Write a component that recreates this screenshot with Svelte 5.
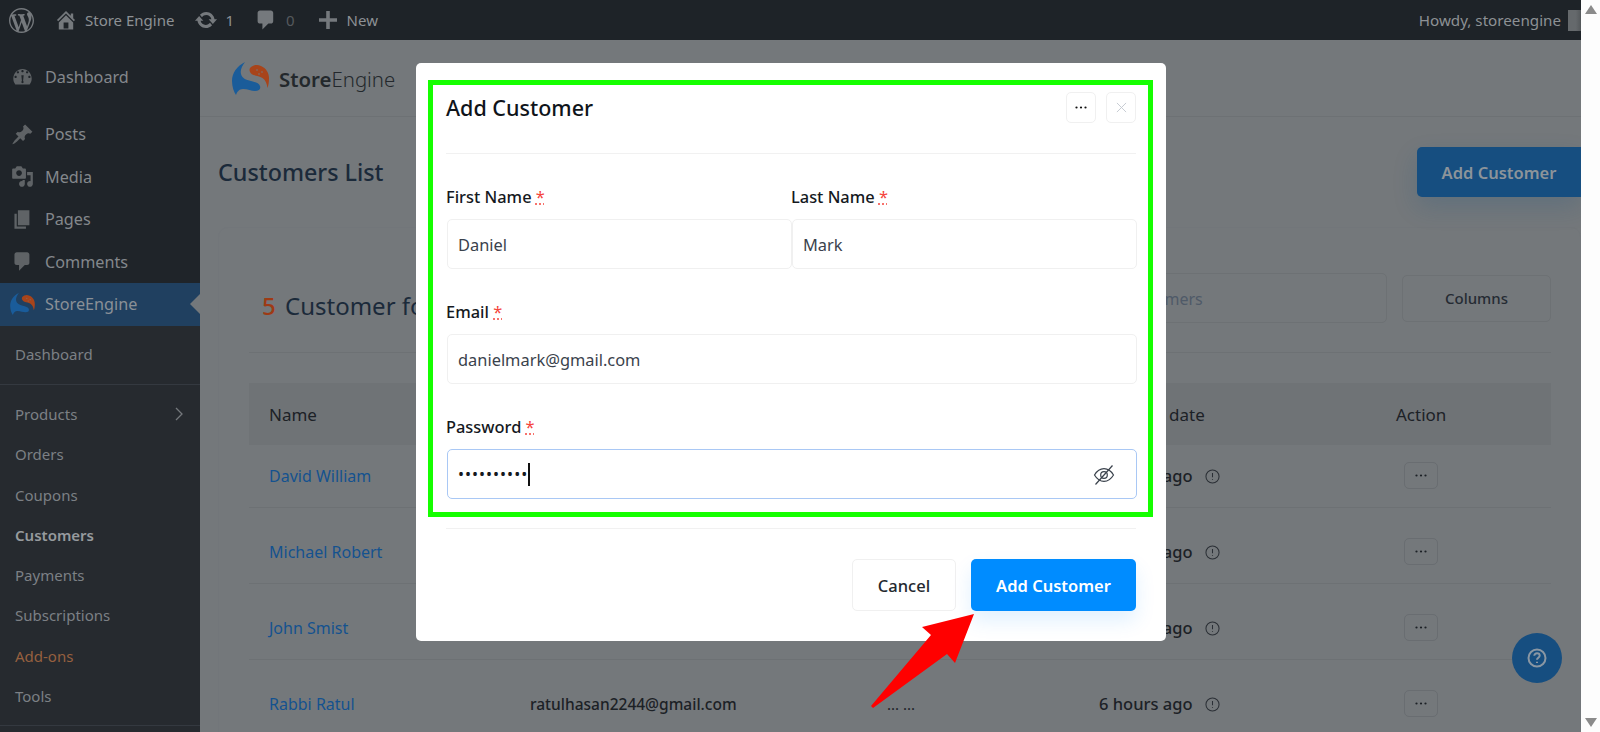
<script>
  const menu = [
    { label: "Posts", d: "M10.44 3.02l1.82-1.82 6.36 6.35-1.83 1.82c-1.05-.68-2.48-.57-3.41.36l-.75.75c-.92.93-1.04 2.35-.35 3.41l-1.83 1.82-2.41-2.41-2.8 2.79c-.42.42-3.38 2.71-3.8 2.29s1.86-3.39 2.28-3.81l2.79-2.79L4.1 9.36l1.83-1.82c1.05.69 2.48.57 3.4-.36l.75-.75c.93-.92 1.05-2.35.36-3.41z" },
    { label: "Media", d: "M13 11V4c0-.55-.45-1-1-1h-1.67L9 1H5L3.67 3H2c-.55 0-1 .45-1 1v7c0 .55.45 1 1 1h10c.55 0 1-.45 1-1zM7 4.5c1.38 0 2.5 1.12 2.5 2.5S8.38 9.5 7 9.5 4.5 8.38 4.5 7 5.62 4.5 7 4.5zM14 6h5v10.5c0 1.38-1.12 2.5-2.5 2.5S14 17.88 14 16.5s1.12-2.5 2.5-2.5c.17 0 .34.02.5.05V9h-3V6zm-4 8.05V13h2v3.5c0 1.38-1.12 2.5-2.5 2.5S7 17.88 7 16.5 8.12 14 9.5 14c.17 0 .34.02.5.05z" },
    { label: "Pages", d: "M6 15V2h10v13H6zm-1 1h8v2H3V5h2v11z" },
    { label: "Comments", d: "M5 2h9c1.1 0 2 .9 2 2v7c0 1.1-.9 2-2 2h-2l-5 5v-5H5c-1.1 0-2-.9-2-2V4c0-1.1.9-2 2-2z" },
  ];

  const submenu = ["Products", "Orders", "Coupons", "Customers", "Payments", "Subscriptions", "Add-ons", "Tools"];

  const customers = [
    { name: "David William", email: "davidwilliam@gmail.com" },
    { name: "Michael Robert", email: "michaelrobert@gmail.com" },
    { name: "John Smist", email: "johnsmist@gmail.com" },
    { name: "Rabbi Ratul", email: "ratulhasan2244@gmail.com" },
  ];
</script>

{#snippet logo(cls)}
  <svg class={cls} viewBox="0 0 37 33">
    <path fill="#1a5c9a" d="M13 0C5 4 0 11 0 19c0 6 2 11 4 14 1-3 3-6 7-6 5 0 8 2 12 2 4 0 6-2 5-5-1-3-5-4-9-5-5-1-9-3-10-7-1-4 1-8 4-12z" />
    <path fill="#a8441a" d="M18 6c3-3 7-4 11-2 5 2 8 7 8 12 0 4-.5 7-1.500 10-.5-4-2-8-5-10-3-2-6-2-9-3-3-1-5-4-3.500-7z" />
    <circle cx="25" cy="8" r=".8" fill="#74787b" /><circle cx="30" cy="10" r=".8" fill="#74787b" /><circle cx="27" cy="12" r=".8" fill="#74787b" />
  </svg>
{/snippet}

{#snippet dots()}
  <svg class="dots" viewBox="0 0 12 3"><circle cx="1.500" cy="1.500" r="1.100" /><circle cx="6" cy="1.500" r="1.100" /><circle cx="10.500" cy="1.500" r="1.100" /></svg>
{/snippet}

<div class="page">
  <div class="viewport">
    <header class="adminbar">
      <svg class="ab-wp" viewBox="0 0 20 20"><path d="M20 10c0-5.510-4.490-10-10-10C4.480 0 0 4.490 0 10c0 5.520 4.480 10 10 10 5.510 0 10-4.480 10-10zM7.780 15.370L4.370 6.220c.55-.02 1.170-.08 1.170-.08.5-.06.44-1.130-.06-1.110 0 0-1.450.11-2.370.11-.18 0-.37 0-.58-.01C4.120 2.690 6.880 1.110 10 1.110c2.330 0 4.450.87 6.050 2.340-.68-.11-1.650.39-1.650 1.580 0 .74.45 1.360.9 2.100.35.61.55 1.360.55 2.460 0 1.490-1.400 5-1.400 5l-3.030-8.370c.54-.02.82-.17.82-.17.5-.05.44-1.250-.06-1.220 0 0-1.440.12-2.380.12-.87 0-2.330-.12-2.330-.12-.5-.03-.56 1.200-.06 1.220l.92.08 1.260 3.410zM17.410 10c.24-.64.74-1.870.43-4.250.7 1.290 1.050 2.710 1.050 4.250 0 3.290-1.730 6.240-4.400 7.780.97-2.590 1.940-5.200 2.920-7.780zM6.100 18.090C3.120 16.650 1.110 13.530 1.110 10c0-1.300.23-2.480.72-3.590C3.250 10.300 4.670 14.200 6.100 18.090zm4.030-6.630l2.580 6.980c-.86.29-1.760.45-2.710.45-.79 0-1.570-.11-2.290-.33.81-2.380 1.620-4.740 2.420-7.100z" /></svg>
      <svg class="ab-icon home" viewBox="0 0 20 20"><path fill-rule="evenodd" d="M16 8.500l1.530 1.530-1.060 1.060L10 4.620l-6.470 6.470-1.060-1.060L10 2.500l4 4v-2h2v4zm-6-2.460l6 5.990V18H4v-5.970zM12 17v-5H8v5h4z" /></svg>
      <span class="ab-site">Store Engine</span>
      <svg class="ab-icon upd" viewBox="0 0 20 20"><path d="M10.200 3.280c3.530 0 6.430 2.610 6.920 6h2.080l-3.500 4-3.500-4h2.320c-.45-1.970-2.210-3.440-4.320-3.440-1.450 0-2.730.71-3.540 1.780L4.950 5.660C6.230 4.200 8.110 3.280 10.200 3.280zm-.4 13.440c-3.520 0-6.430-2.610-6.920-6H.8l3.500-4c1.170 1.330 2.330 2.670 3.500 4H5.480c.45 1.970 2.210 3.440 4.320 3.440 1.450 0 2.730-.71 3.540-1.780l1.710 1.950c-1.280 1.460-3.150 2.390-5.250 2.390z" /></svg>
      <span class="ab-count">1</span>
      <svg class="ab-icon cmt" viewBox="0 0 20 20"><path d="M5 2h9c1.100 0 2 .9 2 2v7c0 1.100-.9 2-2 2h-2l-5 5v-5H5c-1.100 0-2-.9-2-2V4c0-1.100.9-2 2-2z" /></svg>
      <span class="ab-count zero">0</span>
      <svg class="ab-icon plus" viewBox="0 0 20 20"><path d="M17.500 8.500v3h-6v6h-3v-6h-6v-3h6v-6h3v6h6z" /></svg>
      <span class="ab-new">New</span>
      <span class="ab-howdy">Howdy, storeengine</span>
      <span class="ab-avatar"></span>
    </header>

    <div class="below">
      <aside class="sidebar">
        <nav class="menu">
          <a class="item first">
            <svg class="mi" viewBox="0 0 20 20"><path fill-rule="evenodd" d="M3.760 16h12.480c1.100-1.430 1.760-3.210 1.760-5.140C18 6.260 14.420 2.500 10 2.500S2 6.260 2 10.860c0 1.930.66 3.710 1.760 5.140zM10 3.500c.55 0 1 .45 1 1s-.45 1-1 1-1-.45-1-1 .45-1 1-1zM6 4.500c.55 0 1 .45 1 1s-.45 1-1 1-1-.45-1-1 .45-1 1-1zm8 0c.55 0 1 .45 1 1s-.45 1-1 1-1-.45-1-1 .45-1 1-1zM4 8.500c.55 0 1 .45 1 1s-.45 1-1 1-1-.45-1-1 .45-1 1-1zm12 0c.55 0 1 .45 1 1s-.45 1-1 1-1-.45-1-1 .45-1 1-1zM11 8l-.5 5c.3.2.5.5.5 1 0 .6-.4 1-1 1s-1-.4-1-1c0-.5.2-.8.5-1L9 8h2z" /></svg>
            Dashboard
          </a>
          {#each menu as m}
            <a class="item">
              <svg class="mi" viewBox="0 0 20 20"><path d={m.d} /></svg>
              {m.label}
            </a>
          {/each}
          <a class="item active">
            {@render logo("mi-logo")}
            StoreEngine
            <span class="notch"></span>
          </a>
        </nav>
        <div class="sub">
          <a class="sub-dash">Dashboard</a>
          <ul>
            {#each submenu as s}
              <li class:strong={s === "Customers"} class:addon={s === "Add-ons"}>
                {s}
                {#if s === "Products"}
                  <svg class="chev" viewBox="0 0 8 14"><path d="M1 1l6 6-6 6" /></svg>
                {/if}
              </li>
            {/each}
          </ul>
        </div>
      </aside>

      <main class="main">
        <div class="brandbar">
          {@render logo("brand-logo")}
          <span class="brand"><b>Store</b>Engine</span>
        </div>

        <div class="content">
          <div class="titlerow">
            <h1>Customers List</h1>
            <button class="primary-dim">Add Customer</button>
          </div>

          <section class="card">
            <div class="cardhead">
              <h2><span class="num">5</span> Customer found</h2>
              <div class="tools">
                <div class="search">Search customers</div>
                <button class="columns">Columns</button>
              </div>
            </div>

            <div class="table">
              <div class="thead">
                <span>Name</span>
                <span>Email</span>
                <span>Phone</span>
                <span class="th-date">Update date</span>
                <span>Action</span>
              </div>
              {#each customers as c, i}
                <div class="tr" class:first={i === 0}>
                  <a class="name">{c.name}</a>
                  <span class="email">{c.email}</span>
                  <span class="phone">... ...</span>
                  <span class="date">6 hours ago
                    <svg class="info" viewBox="0 0 16 16"><circle cx="8" cy="8" r="7" /><path d="M8 4.200v4.600M8 10.800v1" /></svg>
                  </span>
                  <span class="act"><button class="actbtn">{@render dots()}</button></span>
                </div>
              {/each}
            </div>
          </section>
        </div>

        <button class="help" aria-label="Help">
          <svg viewBox="0 0 20 20"><circle cx="10" cy="10" r="8.500" /><path d="M7.300 7.800c0-1.600 1.200-2.600 2.700-2.600s2.700 1 2.700 2.400c0 2.200-2.700 2.200-2.700 4.200M10 13.700v1.400" /></svg>
        </button>
      </main>
    </div>
  </div>

  <div class="scrollbar">
    <span class="up"></span>
    <span class="down"></span>
  </div>

  <div class="modal">
    <div class="mhead">
      <h3>Add Customer</h3>
      <div class="mbtns">
        <button class="mbtn">{@render dots()}</button>
        <button class="mbtn" aria-label="Close">
          <svg class="x" viewBox="0 0 12 12"><path d="M1 1l10 10M11 1L1 11" /></svg>
        </button>
      </div>
    </div>

    <form class="mbody">
      <div class="two">
        <div>
          <label>First Name <abbr>*</abbr></label>
          <input class="inp" value="Daniel" />
        </div>
        <div>
          <label>Last Name <abbr>*</abbr></label>
          <input class="inp" value="Mark" />
        </div>
      </div>
      <label>Email <abbr>*</abbr></label>
      <input class="inp" value="danielmark@gmail.com" />
      <label>Password <abbr>*</abbr></label>
      <div class="pass">
        <span class="pwdots">{"•".repeat(10)}</span><span class="caret"></span>
        <svg class="eye" viewBox="0 0 22 22"><path d="M1.500 11C4 6.800 7.300 4.700 11 4.700s7 2.100 9.500 6.300c-2.500 4.200-5.800 6.300-9.500 6.300S4 15.200 1.500 11z" /><circle cx="11" cy="11" r="3.300" /><path d="M19.500 1.500L2.500 20.500" /></svg>
      </div>
    </form>

    <div class="mfoot">
      <button class="cancel">Cancel</button>
      <button class="submit">Add Customer</button>
    </div>

    <div class="highlight"></div>
  </div>

  <svg class="arrow" viewBox="0 0 110 100"><polygon points="104,4 52,17 61,25 1,96 3,98 77,44 85,53" /></svg>
</div>

<style>
  :global(body) {
    margin: 0;
    background: #fff;
  }

  .page {
    position: relative;
    display: flex;
    width: 1600px;
    height: 732px;
    overflow: hidden;
    font-family: "Noto Sans", "Open Sans", sans-serif;
    font-size: 16px;
    color: #1c2126;
  }

  button {
    font-family: inherit;
    cursor: pointer;
  }

  .viewport {
    flex: 0 0 1581px;
    display: flex;
    flex-direction: column;
    overflow: hidden;
    background: #74787b;
  }

  .scrollbar {
    position: relative;
    flex: 1;
    background: #fdfdfd;
  }
  .up, .down {
    position: absolute;
    left: 4px;
    width: 0;
    height: 0;
    border-left: 6px solid transparent;
    border-right: 6px solid transparent;
  }
  .up { top: 5px; border-bottom: 9px solid #8b8b8b; }
  .down { bottom: 5px; border-top: 9px solid #8b8b8b; }

  /* admin bar */
  .adminbar {
    flex: 0 0 40px;
    display: flex;
    align-items: center;
    background: #1e2328;
    color: #8d9195;
    font-size: 15px;
    white-space: nowrap;
  }
  .ab-wp {
    width: 25px;
    height: 25px;
    margin-left: 9px;
    fill: #75797d;
  }
  .ab-icon {
    width: 24px;
    height: 24px;
    fill: #75797d;
  }
  .home { margin-left: 20px; }
  .ab-site { margin-left: 7px; }
  .upd { margin-left: 20px; }
  .ab-count { margin-left: 7px; }
  .cmt { margin-left: 20px; }
  .ab-count.zero { color: #55595d; margin-left: 8px; }
  .plus { margin-left: 21px; }
  .ab-new { margin-left: 7px; }
  .ab-howdy { margin-left: auto; font-size: 15.200px; }
  .ab-avatar {
    width: 13px;
    height: 21px;
    margin-left: 7px;
    background: linear-gradient(90deg, #65696c 60%, #54585b);
  }

  .below {
    flex: 1;
    display: flex;
    min-height: 0;
  }

  /* sidebar */
  .sidebar {
    flex: 0 0 200px;
    display: flex;
    flex-direction: column;
    background: #262a2f;
    color: #84888c;
  }
  .menu {
    background: #1f2429;
    padding-top: 16px;
    height: 285px;
    box-sizing: border-box;
    display: flex;
    flex-direction: column;
    flex: none;
    font-size: 16.200px;
  }
  .item {
    position: relative;
    flex: none;
    display: flex;
    align-items: center;
    gap: 11px;
    height: 42.500px;
    padding-left: 11px;
  }
  .item.first { margin-bottom: 14.500px; }
  .mi {
    width: 23px;
    height: 23px;
    fill: #5f6366;
    flex: none;
  }
  .active {
    background: #204060;
    color: #8a9097;
    gap: 10px;
    padding-left: 10px;
  }
  .notch {
    position: absolute;
    right: 0;
    top: 11px;
    border: 10px solid transparent;
    border-left-width: 0;
    border-right-color: #74787b;
  }
  .sub {
    font-size: 15px;
    color: #7c8085;
  }
  .sub-dash {
    display: block;
    padding: 18px 0 18px 15px;
    line-height: 23px;
    border-bottom: 1px solid #343940;
  }
  .sub ul {
    list-style: none;
    margin: 0;
    padding: 9px 0 9px;
    border-bottom: 1px solid #343940;
  }
  .sub li {
    position: relative;
    height: 40.300px;
    line-height: 40.300px;
    padding-left: 15px;
  }
  .sub li.strong {
    font-weight: 600;
    color: #969a9e;
  }
  .sub li.addon { color: #96603f; }
  .chev {
    position: absolute;
    right: 17px;
    top: 13px;
    width: 8px;
    height: 14px;
    fill: none;
    stroke: #74787c;
    stroke-width: 1.300;
  }

  /* main */
  .main {
    position: relative;
    flex: 1;
    min-width: 0;
  }
  .brandbar {
    display: flex;
    align-items: center;
    height: 77px;
    box-sizing: border-box;
    padding: 1px 0 0 32px;
    border-bottom: 1px solid #6d7174;
  }
  .brand-logo {
    width: 37px;
    height: 33px;
  }
  .brand {
    margin-left: 10px;
    font-size: 20.400px;
    font-weight: 300;
    color: #23282c;
  }
  .brand b { font-weight: 600; }
  .mi-logo {
    width: 25px;
    height: 22px;
    flex: none;
  }

  .content { padding-left: 18px; }
  .titlerow {
    display: flex;
    justify-content: space-between;
    align-items: center;
    padding-top: 30px;
  }
  h1 {
    margin: 0;
    font-size: 23.300px;
    font-weight: 500;
    color: #1b2a3a;
    line-height: 50px;
  }
  .primary-dim {
    width: 164px;
    height: 50px;
    border: 0;
    border-radius: 5px 0 0 5px;
    background: #164e80;
    color: #8c949a;
    font-size: 16.500px;
    font-weight: 600;
    box-shadow: 0 10px 25px rgba(20, 78, 128, 0.2);
  }
  .card {
    margin-top: 30px;
    padding: 45px 29px 0 30px;
    border: 1px solid #72767a;
    border-radius: 10px 10px 0 0;
  }
  .cardhead {
    display: flex;
    justify-content: space-between;
    align-items: center;
    height: 50px;
    margin-bottom: 30px;
    position: relative;
  }
  .cardhead::after {
    content: "";
    position: absolute;
    left: 0;
    right: 0;
    bottom: -30px;
    border-bottom: 1px solid #6d7174;
  }
  h2 {
    margin: 15px 0 0 13px;
    font-size: 24px;
    font-weight: 400;
    color: #1b2a3a;
  }
  .num {
    color: #9e3a14;
    font-weight: 500;
    margin-right: 3px;
  }
  .tools {
    display: flex;
    align-items: center;
    gap: 15px;
  }
  .search {
    width: 340px;
    height: 50px;
    box-sizing: border-box;
    line-height: 50px;
    padding-left: 21px;
    white-space: nowrap;
    border: 1px solid #6d7174;
    border-radius: 5px;
    color: #4f5a68;
  }
  .columns {
    width: 149px;
    height: 47px;
    border: 1px solid #6d7174;
    border-radius: 5px;
    background: transparent;
    color: #252b33;
    font-size: 15px;
    font-weight: 500;
  }
  .thead, .tr {
    display: grid;
    grid-template-columns: 261px 357px 212px 297px 175px;
  }
  .thead {
    margin-top: 60px;
    height: 62px;
    align-items: center;
    background: #6f7376;
    color: #1c2126;
    font-size: 17px;
  }
  .thead span { padding-left: 20px; }
  .thead .th-date { padding-left: 27px; }
  .tr {
    height: 76px;
    box-sizing: border-box;
    padding-bottom: 19px;
    align-items: end;
    line-height: 24px;
    border-bottom: 1px solid #6d7174;
  }
  .tr.first { height: 63px; }
  .tr > * { padding-left: 20px; }
  .name { color: #14528f; }
  .email { font-weight: 500; font-size: 15.500px; }
  .phone { font-size: 15px; }
  .date {
    display: flex;
    align-items: center;
    gap: 12px;
    font-size: 16.500px;
    font-weight: 500;
    color: #1c2126;
  }
  .info {
    width: 15px;
    height: 15px;
    fill: none;
    stroke: #2a2f35;
    stroke-width: 1.100;
  }
  .act { display: flex; padding-left: 28px; }
  .actbtn {
    width: 34px;
    height: 27px;
    padding: 0;
    display: flex;
    align-items: center;
    justify-content: center;
    background: transparent;
    border: 1px solid #696d71;
    border-radius: 5px;
    margin-bottom: -1px;
  }
  .dots {
    width: 12px;
    height: 3px;
    fill: #1c2126;
  }
  .help {
    position: absolute;
    right: 19px;
    bottom: 49px;
    width: 50px;
    height: 50px;
    padding: 0;
    display: flex;
    align-items: center;
    justify-content: center;
    border: 0;
    border-radius: 50%;
    background: #164e80;
  }
  .help svg {
    width: 20px;
    height: 20px;
    fill: none;
    stroke: #8a97a3;
    stroke-width: 2;
  }

  /* modal */
  .modal {
    position: absolute;
    left: 416px;
    top: 63px;
    width: 750px;
    height: 578px;
    box-sizing: border-box;
    padding: 0 30px;
    border-radius: 5px;
    background: #fff;
  }
  .mhead {
    display: flex;
    justify-content: space-between;
    align-items: center;
    padding: 29px 0 30px;
    border-bottom: 1px solid #f1f1f1;
  }
  h3 {
    margin: 0;
    font-size: 21.500px;
    font-weight: 500;
    color: #0f141a;
  }
  .mbtns {
    display: flex;
    gap: 10px;
  }
  .mbtn {
    width: 30px;
    height: 31px;
    padding: 0;
    display: flex;
    align-items: center;
    justify-content: center;
    background: #fff;
    border: 1px solid #f0f0f0;
    border-radius: 5px;
  }
  .mbtn .dots { fill: #111; }
  .x {
    width: 11px;
    height: 11px;
    fill: none;
    stroke: #c3c8d0;
    stroke-width: 1;
  }
  .mbody {
    padding-bottom: 29px;
    border-bottom: 1px solid #f1f1f1;
  }
  .two {
    display: grid;
    grid-template-columns: 345px 345px;
  }
  label {
    display: block;
    padding-top: 31px;
    line-height: 24px;
    margin-bottom: 10px;
    color: #15191e;
    font-size: 16.400px;
    font-weight: 500;
  }
  abbr {
    color: #f5443c;
    font-weight: 400;
    text-decoration: underline dotted #f5443c;
  }
  .inp, .pass {
    display: block;
    box-sizing: border-box;
    width: 100%;
    height: 50px;
    margin-left: 1px;
    padding: 0 10px;
    border: 1px solid #f0f0f0;
    border-radius: 5px;
    outline: 0;
    font: inherit;
    font-size: 16.400px;
    color: #3a424c;
  }
  .two .inp { width: 345px; }
  .mbody > .inp, .pass { width: 690px; }
  .pass {
    position: relative;
    display: flex;
    align-items: center;
    border-color: #a9c8f5;
  }
  .pwdots {
    font-size: 16px;
    letter-spacing: 1px;
    color: #15191e;
  }
  .caret {
    width: 1.500px;
    height: 23px;
    background: #111;
  }
  .eye {
    position: absolute;
    right: 21px;
    top: 14px;
    width: 22px;
    height: 22px;
    fill: none;
    stroke: #3a424c;
    stroke-width: 1.200;
  }
  .mfoot {
    display: flex;
    justify-content: flex-end;
    gap: 15px;
    padding-top: 30px;
  }
  .cancel {
    width: 104px;
    height: 52px;
    padding-top: 2px;
    background: #fff;
    border: 1px solid #f0f0f0;
    border-radius: 5px;
    color: #23282e;
    font-size: 16.500px;
    font-weight: 500;
  }
  .submit {
    width: 165px;
    height: 52px;
    padding-top: 2px;
    background: #008cff;
    border: 0;
    border-radius: 5px;
    color: #fff;
    font-size: 16.500px;
    font-weight: 600;
    box-shadow: 0 10px 20px rgba(0, 140, 255, 0.12);
  }

  /* annotations drawn over the screenshot */
  .highlight {
    position: absolute;
    left: 12px;
    top: 17px;
    width: 725px;
    height: 437px;
    box-sizing: border-box;
    border: 5px solid #15ff00;
    pointer-events: none;
  }
  .arrow {
    position: absolute;
    left: 870px;
    top: 610px;
    width: 110px;
    height: 100px;
    fill: #ff0000;
  }
</style>
